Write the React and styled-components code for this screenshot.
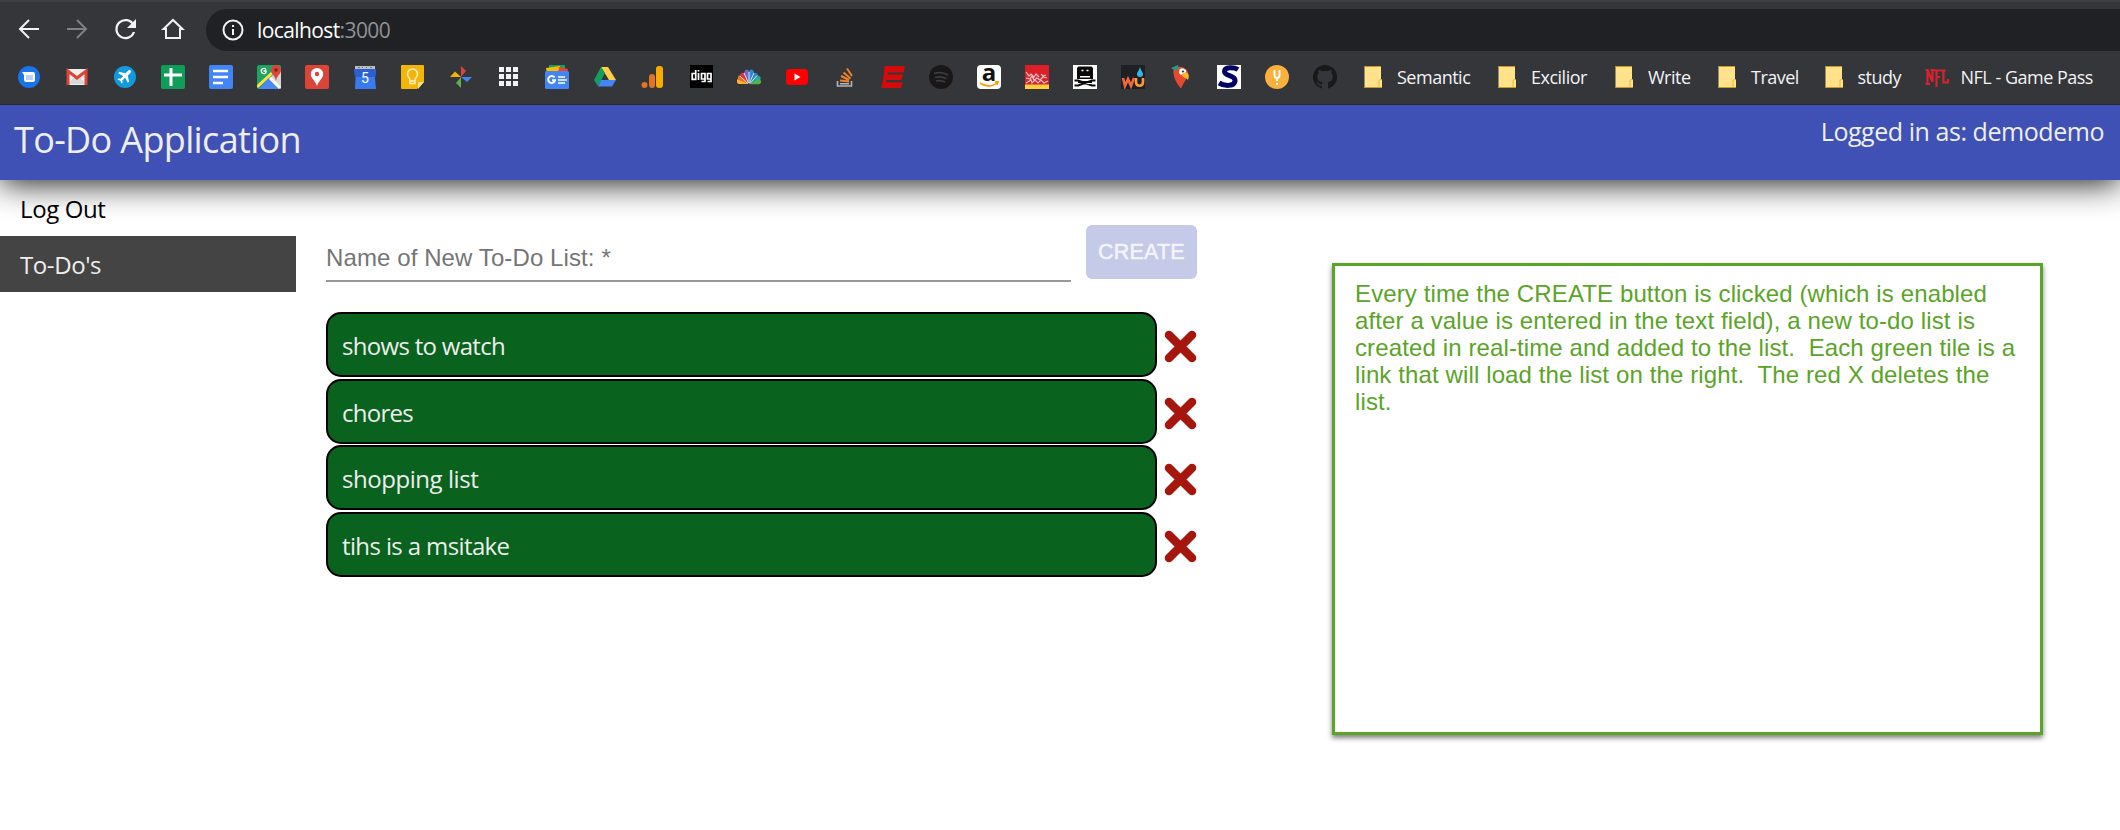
import React from "react";
import styled, { createGlobalStyle } from "styled-components";

const GlobalStyle = createGlobalStyle`
  * { box-sizing: border-box; }
  body { margin: 0; background: #fff; overflow: hidden; font-family: "Open Sans", "Noto Sans", sans-serif; }
`;

const ui = `"Open Sans", "Noto Sans", sans-serif`;
const arial = `"Liberation Sans", Arial, sans-serif`;

const Page = styled.div`
  width: 2120px;
  height: 830px;
  display: flex;
  flex-direction: column;
  background: #fff;
`;
const Chrome = styled.header`
  position: relative;
  z-index: 1;
  height: 105px;
  background: #35363a;
  border-top: 2px solid #3c4043;
  border-bottom: 1px solid #28292c;
`;
const NavRow = styled.div`
  height: 56px;
  display: flex;
  align-items: center;
  gap: 24px;
  padding: 0 0 2px 17px;
`;
const NavIcon = styled.svg`
  width: 24px;
  height: 24px;
  flex: none;
  fill: none;
  stroke: ${(p) => (p.$dim ? "#808184" : "#f1f3f4")};
  stroke-width: 2;
`;
const AddressBar = styled.div`
  flex: 1;
  height: 42px;
  margin: 2px -30px 0 -3px;
  padding-left: 15px;
  display: flex;
  align-items: center;
  border-radius: 21px;
  background: #202124;
`;
const Url = styled.span`
  margin-left: 12px;
  font: 21px/28px ${ui};
  letter-spacing: -0.6px;
  color: #fff;
`;
const Port = styled.span`
  color: #8f9195;
`;
const Bookmarks = styled.nav`
  height: 46px;
  padding: 0 0 8px 17px;
  display: flex;
  align-items: center;
  gap: 24px;
`;
const Favicon = styled.svg`
  width: 24px;
  height: 24px;
  flex: none;
`;
const Bookmark = styled.div`
  display: flex;
  align-items: center;
  gap: 12px;
  flex: none;
  width: ${(p) => p.$w}px;
  white-space: nowrap;
  font: 18px/24px ${ui};
  letter-spacing: -0.5px;
  color: #f1f3f4;
`;
const AppBar = styled.div`
  height: 75px;
  flex: none;
  display: flex;
  justify-content: space-between;
  background: #3f51b5;
  color: #eee;
  box-shadow: 0 3px 33px rgba(0, 0, 0, 0.92);
`;
const Title = styled.h1`
  margin: 10px 0 0 14px;
  font: 36px/50px ${ui};
  letter-spacing: -0.65px;
`;
const User = styled.div`
  margin: 9px 16px 0 0;
  font: 25px/34px ${ui};
  letter-spacing: -0.45px;
`;
const Body = styled.div`
  display: flex;
  align-items: flex-start;
`;
const Sidebar = styled.aside`
  width: 296px;
  flex: none;
`;
const SideLink = styled.div`
  height: 56px;
  padding: 12px 0 0 20px;
  font: 24px/34px ${ui};
  letter-spacing: -0.4px;
  color: ${(p) => (p.$active ? "#eee" : "#000")};
  background: ${(p) => (p.$active ? "#444" : "transparent")};
`;
const Main = styled.main`
  width: 871px;
  margin: 45px 0 0 30px;
`;
const Form = styled.form`
  display: flex;
  gap: 15px;
`;
const Field = styled.label`
  width: 745px;
  height: 57px;
  padding-top: 19px;
  border-bottom: 2px solid #989898;
  font: 24px/28px ${arial};
  letter-spacing: 0.1px;
  color: #757575;
`;
const CreateButton = styled.button`
  width: 111px;
  height: 54px;
  padding: 0;
  border: 0;
  border-radius: 6px;
  background: #c5cae9;
  color: #f4f5fb;
  font: 21.5px/54px ${arial};
  -webkit-text-stroke: 0.5px #f4f5fb;
  letter-spacing: 0.2px;
`;
const Lists = styled.div`
  margin-top: 30px;
  display: flex;
  flex-direction: column;
  gap: 1.5px;
`;
const ListRow = styled.div`
  display: flex;
  align-items: center;
  gap: 7px;
`;
const Tile = styled.div`
  width: 831px;
  height: 65px;
  padding: 15px 0 0 14px;
  border: 2px solid #000;
  border-radius: 15px;
  background: #09621e;
  color: #eee;
  font: 24px/34px ${ui};
  letter-spacing: ${(p) => p.$ls}px;
`;
const DeleteIcon = styled.svg`
  width: 33px;
  height: 33px;
  margin-top: 4px;
`;
const Note = styled.section`
  width: 711px;
  height: 472px;
  margin: 83px 0 0 135px;
  padding: 14px 20px 0;
  border: 3px solid #5aa427;
  background: #fff;
  box-shadow: 0 3px 5px rgba(0, 0, 0, 0.5);
  font: 24px/27px ${arial};
  letter-spacing: 0.12px;
  color: #5aa427;
  white-space: pre;
`;

const R = (p) => <rect {...p} />;
const icons = [
  <><circle cx="12" cy="12" r="11" fill="#1a73e8" /><path d="M5 7h11a2 2 0 0 1 2 2v6a2 2 0 0 1-2 2H9a2 2 0 0 1-2-2v-5z" fill="#fff" /><path d="M9 10h7v5H9z" fill="#b8d2f8" /></>,
  <><path d="M2 4h20v16H2z" fill="#eee" /><path d="M3 19l7-8h4l7 8z" fill="#d8d8d8" /><path d="M3 20V6l9 7 9-7v14" fill="none" stroke="#db4437" strokeWidth="3" /></>,
  <><circle cx="12" cy="12" r="11" fill="#129bdc" /><path d="M17.5 5.5c1 1 .4 2-.3 2.7l-2.4 2.5 1.3 6-1.2 1.1-2.8-5-2.8 2.7.3 2.2-1 .9-1.3-2.8-2.8-1.3.9-1 2.2.2 2.7-2.8-5-2.7 1.2-1.2 6 1.3 2.4-2.4c.8-.8 1.8-1.2 2.6-.4z" fill="#fff" /></>,
  <><R width="24" height="24" rx="2" fill="#0f9d58" /><path d="M3 10h18M10 3v18" stroke="#fff" strokeWidth="3" /></>,
  <><R width="24" height="24" rx="2" fill="#4285f4" /><path d="M4 6h15M4 12h15M4 18h10" stroke="#fff" strokeWidth="2.6" /></>,
  <><R width="24" height="24" rx="2" fill="#1ea362" /><path d="M12 13l12 11V4z" fill="#d7d7d7" /><path d="M2 24l10-11 10 11z" fill="#4a89f3" /><path d="M0 22L15 8" stroke="#ffe047" strokeWidth="3" /><path d="M13 13l10 10" stroke="#fff" strokeWidth="3" /><path d="M9 4.5a2.6 2.6 0 1 0 0 3V6H6.5" fill="none" stroke="#fff" strokeWidth="1.3" /><path d="M19 0a5 5 0 0 1 5 5c0 4-4 5-5 11-1-6-5-7-5-11a5 5 0 0 1 5-5z" fill="#db4437" /><circle cx="19" cy="5" r="1.8" fill="#7b231e" /></>,
  <><R width="24" height="24" rx="2" fill="#db4437" /><path d="M12 3a6.2 6.2 0 0 1 6.2 6.2c0 4-4.2 6-6.2 11.8-2-5.8-6.2-7.8-6.2-11.8A6.2 6.2 0 0 1 12 3z" fill="#fff" /><circle cx="12" cy="9" r="2.2" fill="#db4437" /></>,
  <><path d="M2 1h20v5H2z" fill="#bdbdc4" /><path d="M5 2.5h2M9 2.5h1M13 2.5h1M17 2.5h2" stroke="#777" /><path d="M1 4h22l-1 9 1 11H2l.5-11z" fill="#3a7af0" /><path d="M1 4h22l-1 8H2z" fill="#2a60d0" /><text x="12" y="18" textAnchor="middle" fontFamily="Roboto" fontSize="14" fill="#fff">5</text></>,
  <><path d="M1 0h21a1 1 0 0 1 1 1v16l-7 7H1a1 1 0 0 1-1-1V1a1 1 0 0 1 1-1z" fill="#f4b50b" /><path d="M23 17h-6v7z" fill="#fce48c" /><path d="M9 15c0-2-2.5-3-2.5-6a5 5 0 0 1 10 0c0 3-2.5 4-2.5 6v3.5H9z M9 16h5" fill="none" stroke="#fdf0c0" strokeWidth="1.5" /></>,
  <><path d="M12 1l5 5-5 6z" fill="#db4437" /><path d="M1 12l5-5.5 6 5.5z" fill="#f4b400" /><path d="M12 12h11l-5 5z" fill="#4285f4" /><path d="M12 12v11l-5-5z" fill="#5bb04b" /></>,
  <>{[2, 9, 16].map((y) => [2, 9, 16].map((x) => <rect key={x + "-" + y} x={x} y={y} width="5" height="5" fill="#f1f3f4" />))}</>,
  <><path d="M4 0h16v7H4z" fill="#18a05e" /><path d="M1 3l14-2v8H2z" fill="#fbbc04" /><path d="M14 2l9 2-1 5h-9z" fill="#ea4335" /><R y="6" width="24" height="18" rx="1.5" fill="#4285f4" /><path d="M9.5 12.5a3.5 3.5 0 1 0 .6 2.8H7" fill="none" stroke="#fff" strokeWidth="1.9" /><path d="M13 12h7M13 15h9M13 18h7" stroke="#fff" strokeWidth="1.7" /></>,
  <><path d="M8 2h7l8 13h-7z" fill="#ffcf48" /><path d="M8 2l4 6-7 13-4-6z" fill="#11a05e" /><path d="M8 15h15l-4 6.5H5z" fill="#4285f4" /></>,
  <><R x="15" y="1" width="7" height="22" rx="3" fill="#f9ab00" /><R x="8" y="9" width="6" height="14" rx="3" fill="#e37422" /><circle cx="3.5" cy="20" r="3" fill="#e37422" /></>,
  <><R x="1" width="23" height="23" fill="#000" /><path d="M6.7 5v9.300H3.200V8.500h3.500M9.500 8v7M9.500 5v1.500M16 14H12.500V8.500H16v8h-3.500M22 14H18.500V8.500H22v8h-3.500" fill="none" stroke="#fff" strokeWidth="1.700" /></>,
  <><path d="M12 19H1.500a3 3 0 0 1-.8-5z" fill="#fbb034" /><path d="M11.500 19L1 14.500c-1-4 2-5 4-3.500z" fill="#f37021" /><path d="M11.500 18L3 11c0-4 4-4 5.500-2z" fill="#d8334a" /><path d="M12 17.500L7 8c1-5 5-4 5-1z" fill="#7567b6" /><path d="M12 17.500V7c1-4 5-3 5 1z" fill="#2c8ad6" /><path d="M12.500 18L16 8.500c3-2 5 0 5 2.500z" fill="#2b7fcb" /><path d="M12.500 19l7-8c4-1 5 2 3.500 4z" fill="#27a6a0" /><path d="M12 19.200l10-5.200c3 1 2.500 5 0 5.200z" fill="#53b54a" /><path d="M12 18V7M11.500 18L7 8M12.500 18L17 8M11 18.500L3 11M13 18.500l7-8" stroke="#fff" strokeWidth=".8" /></>,
  <><R x="1" y="4" width="22" height="16" rx="4" fill="#f00" /><path d="M9.5 8.5v7l6-3.5z" fill="#fff" /></>,
  <><path d="M4.5 16v5h14v-5M7 18.7h9" fill="none" stroke="#b2b5b9" strokeWidth="1.6" /><path d="M7 15.5l9 1M8 11l8 4M10.5 7.5l7 6M14 3.5l5 7.5" stroke="#f48024" strokeWidth="2" /></>,
  <path d="M3.5 1H24l-1.5 6.500H7l-.4 2H22L20.500 15H5.600l-.6 2.300h16.500L20 23H.5l2-11z" fill="#d50a0a" />,
  <><circle cx="12" cy="12" r="12" fill="#191718" /><path d="M5 8.5c5-1.500 10-1 14 1.500M6 12.500c4-1.200 8-.8 11.500 1M7 16c3-.8 6-.5 9 1" fill="none" stroke="#3c3d40" strokeWidth="1.7" /></>,
  <><R width="24" height="24" rx="4" fill="#fff" /><text x="12" y="16" textAnchor="middle" fontFamily="Open Sans" fontWeight="700" fontSize="24" fill="#111">a</text><path d="M3 18c6 4 12 4 17 0M18 17l3-.3-1 3" fill="none" stroke="#f90" strokeWidth="1.6" /></>,
  <><R width="24" height="24" fill="#da1f28" /><R y="19.500" width="24" height="4.500" fill="#ffd03a" /><path d="M1 7l3 4 2-2 3 3 2-3 3 3M1 13l4 1 2-3 2 4 3-2 3 2 3-3 4 1M1 18l5-3 1 3 3-3 3 3 3-3 3 3 4-2M16 9l2 2 3-1" fill="none" stroke="#f8c4c6" strokeWidth="1.200" /></>,
  <><R width="24" height="24" fill="#fff" /><path d="M5.5 1.5h13L20 3v11H4V3z" fill="#0a0a0a" /><path d="M8.500 5.500h2M13.500 5.500h2M7 11.700h10" stroke="#fff" strokeWidth="1.500" /><path d="M1.500 15.500H5l14 5h3.500M22.500 15.500H19L5 20.500H1.500M5 17h14" fill="none" stroke="#0a0a0a" strokeWidth="2.200" /></>,
  <><R width="24" height="24" fill="#1e2023" /><path d="M2 13l2 8 3-7 3 7 3-8" fill="none" stroke="#f2673b" strokeWidth="2.6" /><path d="M15 13v4c0 5 7 5 7 0v-4" fill="none" stroke="#f79b32" strokeWidth="2.6" /><path d="M19 2c1 4 3 5 3 7a3 3 0 0 1-6 0c0-2 2-3 3-7z" fill="#36b4ea" /></>,
  <><path d="M4.5 4c5-4 12-2 14.500 3 1 5-3 8-7 16.500C8 19 3.500 12 4.500 4z" fill="#e6492d" /><path d="M2 3l7-3 1 3.500-4 2z" fill="#249c88" /><path d="M12 3.500c4-.5 6 2 5 4l-5 2.500c-3-2-2.500-5.500 0-6.500z" fill="#fff" /><path d="M14 8c5-2 7 2 5 7-1-2-4-2-6-4z" fill="#fdba2e" /><circle cx="14" cy="6.500" r="1" fill="#222" /></>,
  <><R width="24" height="24" fill="#fff" /><path d="M21 4.500C17 2 7.500 1.500 7.500 6.500c0 5 11.500 3.500 10.500 9.500-1 6-11 5-16 2" fill="none" stroke="#040466" strokeWidth="5" /></>,
  <><circle cx="12" cy="12" r="12" fill="#f7b13c" /><path d="M9.500 5v5c0 4 5 4 5 0V5M12 13v3M12 18v2" fill="none" stroke="#fff" strokeWidth="1.9" /></>,
  <path d="M12 0A12 12 0 0 0 8.2 23.4c.6.1.8-.3.8-.6v-2c-3.3.7-4-1.6-4-1.6-.6-1.4-1.4-1.8-1.4-1.8-1-.7.1-.7.1-.7 1.2 0 1.9 1.2 1.9 1.2 1 1.8 2.8 1.3 3.5 1 0-.8.4-1.3.7-1.6-2.7-.3-5.5-1.3-5.5-6 0-1.2.5-2.3 1.3-3.1-.2-.4-.6-1.6.1-3.2 0 0 1-.3 3.3 1.2a11.5 11.5 0 0 1 6 0c2.3-1.5 3.3-1.2 3.3-1.2.7 1.6.3 2.8.1 3.2.8.8 1.3 1.9 1.3 3.2 0 4.6-2.800 5.600-5.500 5.900.5.4.9 1 .9 2.200v3.300c0 .3.1.7.8.6A12 12 0 0 0 12 0z" fill="#191919" />,
];

const folders = [
  { name: "Semantic", w: 110 },
  { name: "Excilior", w: 93 },
  { name: "Write", w: 79 },
  { name: "Travel", w: 82.5 },
  { name: "study", w: 79 },
];
const todoLists = [
  { name: "shows to watch", ls: -0.7 },
  { name: "chores", ls: -0.75 },
  { name: "shopping list", ls: -0.45 },
  { name: "tihs is a msitake", ls: -0.62 },
];

const FolderIcon = () => (
  <Favicon viewBox="0 0 24 24">
    <path d="M3.5 1h16.500v13l1 1v8H3.500z" fill="#ffe28a" />
    <path d="M3.5 1.500H20M3.500 22.500H21" stroke="#c79a27" />
    <path d="M20.5 14.500l-2.500.5v7" fill="none" stroke="#e3b83c" />
  </Favicon>
);

export default function App() {
  return (
    <>
      <GlobalStyle />
      <Page>
        <Chrome>
          <NavRow>
            <NavIcon viewBox="0 0 24 24"><path d="M22 12H3.500M12 3L3 12l9 9" /></NavIcon>
            <NavIcon $dim viewBox="0 0 24 24"><path d="M2 12h18.500M12 3l9 9-9 9" /></NavIcon>
            <NavIcon viewBox="0 0 24 24"><path d="M20.500 8A9 9 0 1 0 21 15" strokeWidth="2.3" /><path d="M23 2v9h-9z" fill="#f1f3f4" stroke="none" /></NavIcon>
            <NavIcon viewBox="0 0 24 24"><path d="M5 12v9h14v-9h2.500L12 3l-9.500 9z" /></NavIcon>
            <AddressBar>
              <NavIcon viewBox="0 0 24 24"><circle cx="12" cy="12" r="9.5" /><path d="M12 11v6M12 7v2" /></NavIcon>
              <Url>localhost<Port>:3000</Port></Url>
            </AddressBar>
          </NavRow>
          <Bookmarks>
            {icons.map((icon, i) => <Favicon key={i} viewBox="0 0 24 24">{icon}</Favicon>)}
            {folders.map((f) => <Bookmark key={f.name} $w={f.w}><FolderIcon />{f.name}</Bookmark>)}
            <Bookmark $w={175}>
              <Favicon viewBox="0 0 24 24">
                <path d="M2.5 19V5l5 12V4M5 19H.5M.5 5h3M5.500 5h4M11.500 22V5.500H17M11.500 12H15M9.500 5.500h2M18.500 5v12.500H23V14M16.500 5.500h4" fill="none" stroke="#d8232e" strokeWidth="2.2" />
              </Favicon>
              NFL - Game Pass
            </Bookmark>
          </Bookmarks>
        </Chrome>
        <AppBar>
          <Title>To-Do Application</Title>
          <User>Logged in as: demodemo</User>
        </AppBar>
        <Body>
          <Sidebar>
            <SideLink>Log Out</SideLink>
            <SideLink $active>To-Do's</SideLink>
          </Sidebar>
          <Main>
            <Form>
              <Field>Name of New To-Do List: *</Field>
              <CreateButton type="button">CREATE</CreateButton>
            </Form>
            <Lists>
              {todoLists.map((l) => (
                <ListRow key={l.name}>
                  <Tile $ls={l.ls}>{l.name}</Tile>
                  <DeleteIcon viewBox="0 0 33 33">
                    <path d="M5 5l23 23M28 5L5 28" stroke="#a6160c" strokeWidth="8.5" strokeLinecap="round" />
                  </DeleteIcon>
                </ListRow>
              ))}
            </Lists>
          </Main>
          <Note>{`Every time the CREATE button is clicked (which is enabled
after a value is entered in the text field), a new to-do list is
created in real-time and added to the list.  Each green tile is a
link that will load the list on the right.  The red X deletes the
list.`}</Note>
        </Body>
      </Page>
    </>
  );
}
